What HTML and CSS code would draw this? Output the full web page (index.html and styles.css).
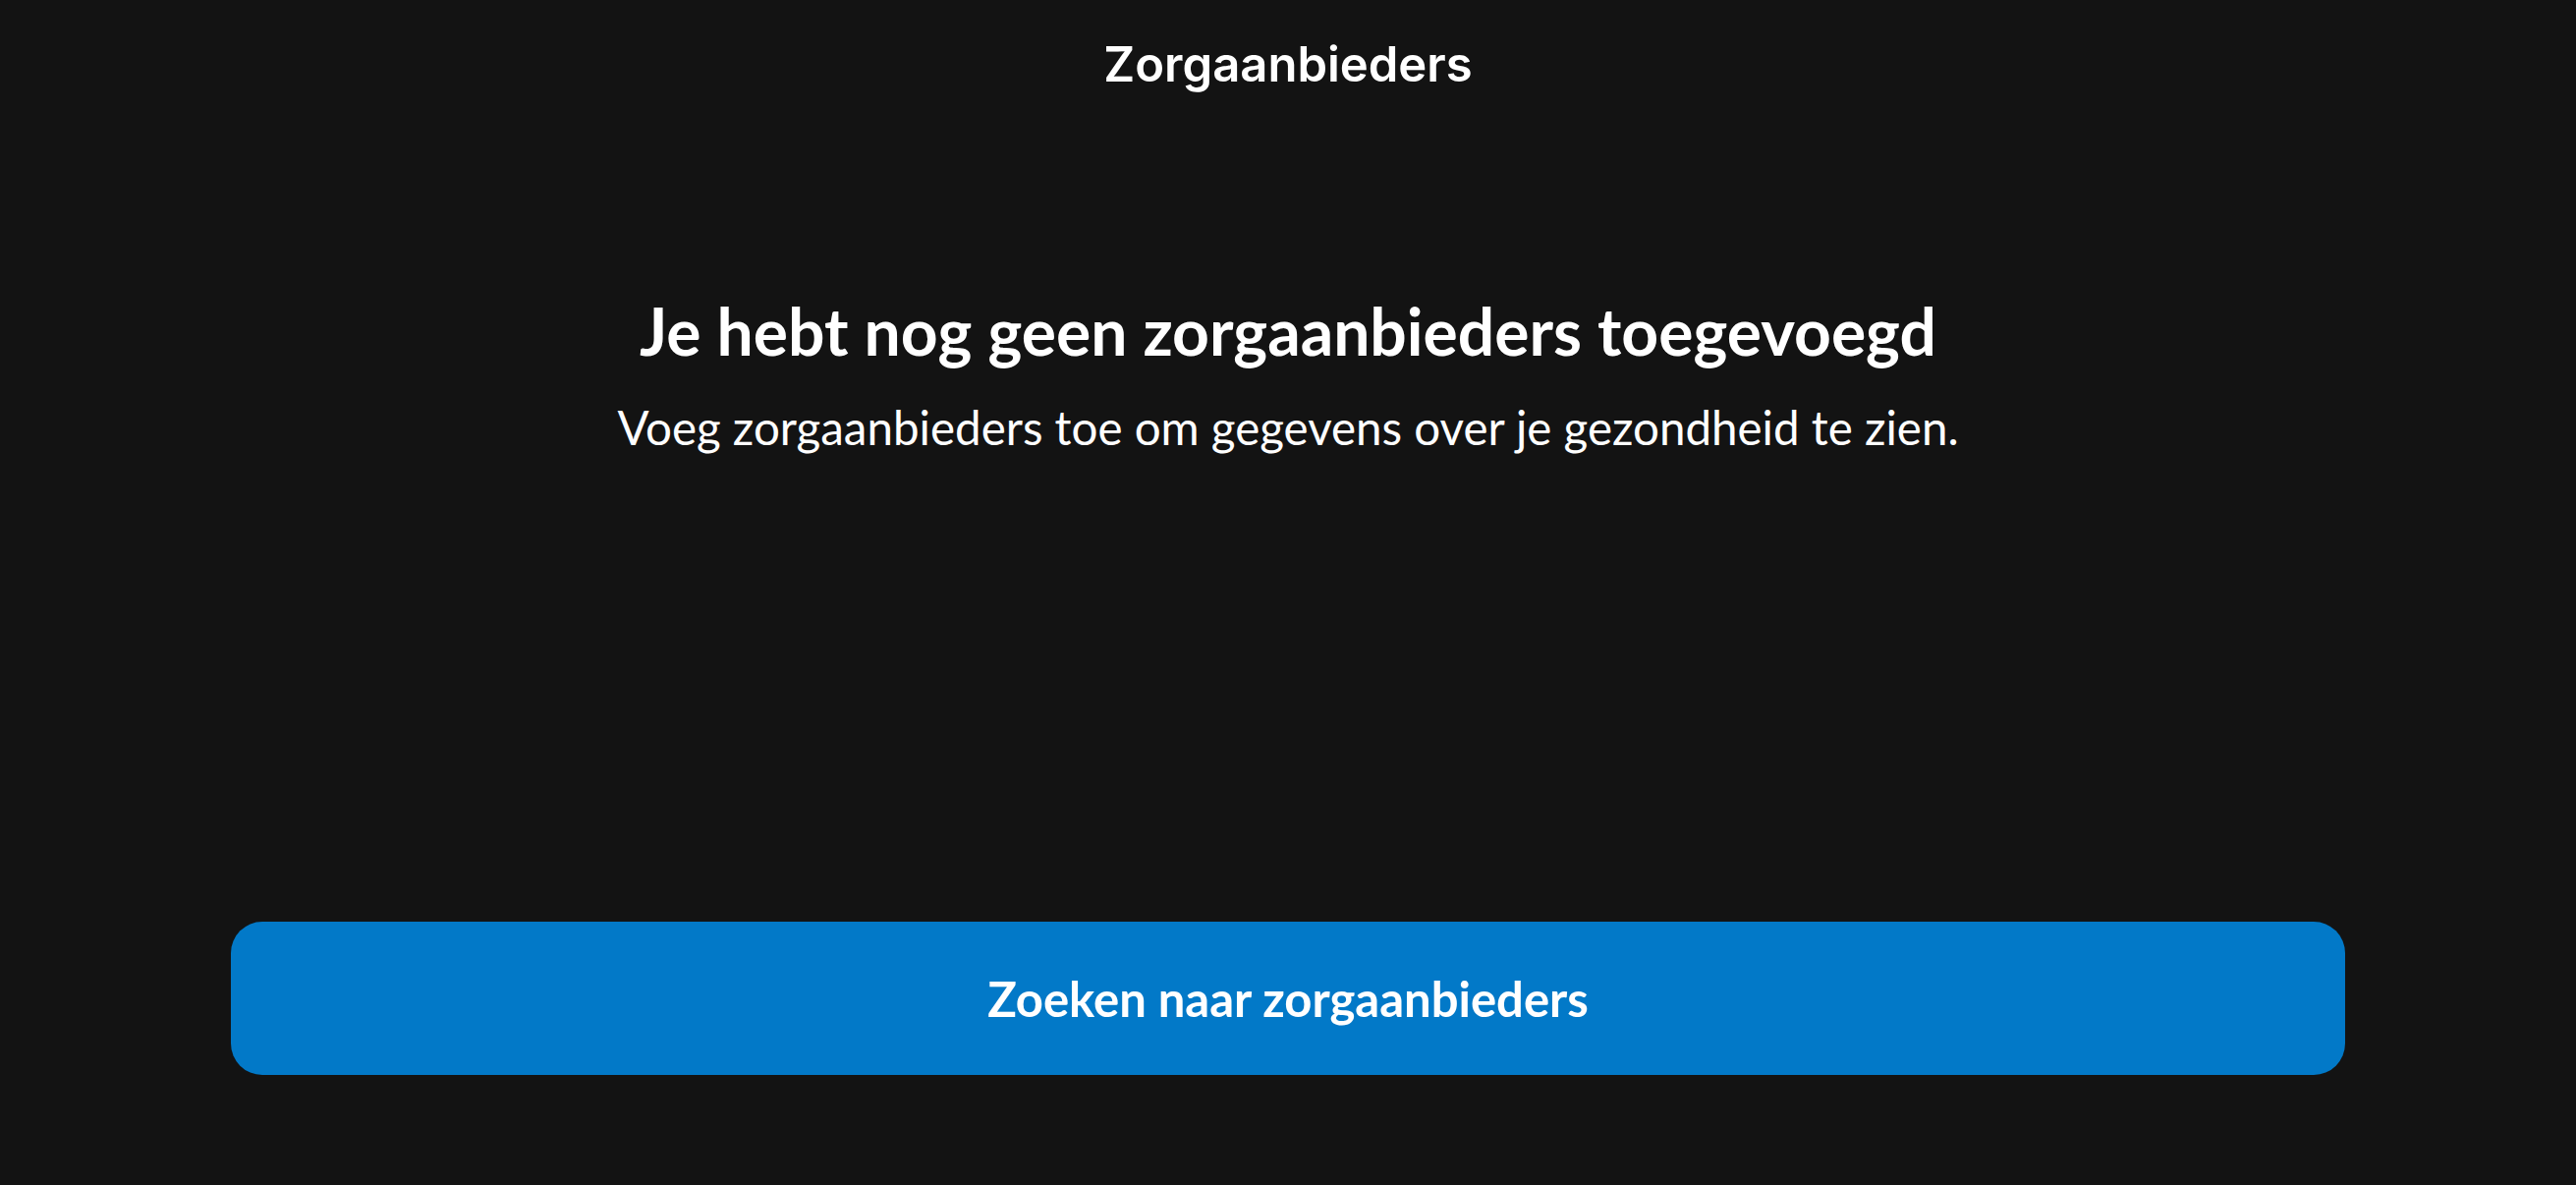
FILE: index.html
```html
<!DOCTYPE html>
<html lang="nl">
<head>
<meta charset="utf-8">
<title>Zorgaanbieders</title>
<link rel="stylesheet" href="styles.css">
</head>
<body>
<div class="screen">
  <header class="topbar"><h1 class="topbar-title">Zorgaanbieders</h1></header>
  <main class="empty">
    <h2 class="empty-title">Je hebt nog geen zorgaanbieders toegevoegd</h2>
    <p class="empty-text">Voeg zorgaanbieders toe om gegevens over je gezondheid te zien.</p>
  </main>
  <footer class="actions">
    <button class="primary-btn" type="button">Zoeken naar zorgaanbieders</button>
  </footer>
</div>
</body>
</html>
```
FILE: styles.css
```css
html, body {
  margin: 0;
  padding: 0;
  background: #131313;
}
.screen {
  width: 2622px;
  height: 1206px;
  display: flex;
  flex-direction: column;
  align-items: center;
  color: #ffffff;
}
.topbar {
  height: 130px;
  display: flex;
  align-items: center;
  justify-content: center;
}
.topbar-title {
  margin: 0;
  font-family: Inter, "Liberation Sans", sans-serif;
  font-weight: 600;
  font-size: 49px;
  line-height: 1;
}
.empty {
  display: flex;
  flex-direction: column;
  align-items: center;
  padding-top: 167px;
  flex: 1;
}
.empty-title {
  margin: 0;
  font-family: Lato, "Open Sans", sans-serif;
  font-weight: 700;
  font-size: 66px;
  line-height: 80px;
}
.empty-text {
  margin: 28px 0 0;
  font-family: Lato, "Open Sans", sans-serif;
  font-weight: 400;
  font-size: 47.5px;
  line-height: 60px;
}
.actions {
  width: 2152px;
  padding-bottom: 112px;
}
.primary-btn {
  width: 100%;
  height: 156px;
  border: 0;
  border-radius: 32px;
  background: #0279c8;
  color: #ffffff;
  font-family: Lato, "Open Sans", sans-serif;
  font-weight: 700;
  font-size: 49px;
}
```
